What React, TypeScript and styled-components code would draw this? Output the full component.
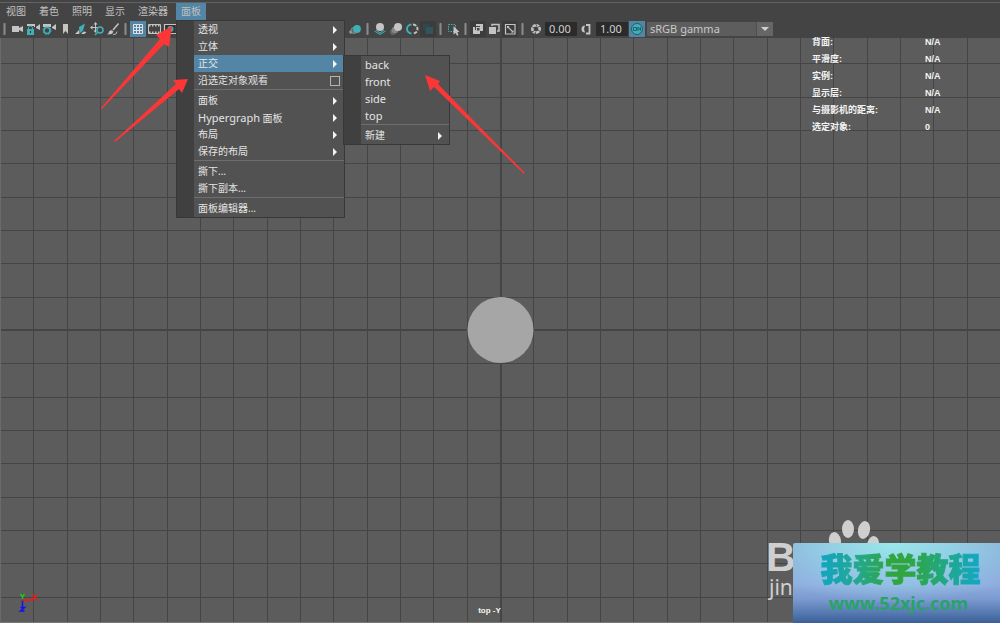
import React from 'react';
import styled, { createGlobalStyle } from 'styled-components';

const latin = '"Noto Sans", "Noto Sans CJK SC", sans-serif';
const teal = '#3fb0b8';
const pale = '#c4c4c4';

const GlobalStyle = createGlobalStyle`
  * { box-sizing: border-box; }
  body { margin: 0; background: #5c5c5c; font-family: ${latin}; font-size: 10px; color: #e0e0e0; }
  button, input, select { font-family: inherit; color: inherit; }
`;

const Panel = styled.div`
  position: relative;
  display: flex;
  flex-direction: column;
  min-height: 100vh;
  overflow: hidden;
`;

const MenuBar = styled.nav`
  display: flex;
  gap: 3px;
  margin-top: 2px;
  padding: 0 1px;
  border-top: 1px solid #626262;
`;

const Header = styled.header`
  background: #444;
  display: flex;
  flex-direction: column;
`;

const MenuSlot = styled.div`
  position: relative;
`;

const MenuTitle = styled.button<{ $open?: boolean }>`
  display: block;
  height: 17px;
  padding: 0 5px;
  border: 0;
  font-size: 10px;
  line-height: 17px;
  white-space: nowrap;
  color: #c0c0c0;
  background: ${(p) => (p.$open ? '#5285a6' : 'transparent')};
`;

const Dropdown = styled.div<{ $width: number; $sub?: boolean }>`
  position: absolute;
  z-index: 3;
  top: ${(p) => (p.$sub ? '0' : '100%')};
  left: ${(p) => (p.$sub ? '100%' : '0')};
  margin-left: ${(p) => (p.$sub ? '-1px' : '0')};
  width: ${(p) => p.$width}px;
  padding-left: 17px;
  border: 1px solid #383838;
  background: #404040;
`;

const MenuGroup = styled.div`
  background: #525252;
  & + & {
    border-top: 1px solid #6e6e6e;
    padding-top: 2px;
  }
`;

const MenuRow = styled.div`
  position: relative;
`;

const MenuItem = styled.button<{ $active?: boolean }>`
  display: flex;
  align-items: center;
  justify-content: space-between;
  width: 100%;
  height: 17px;
  padding: 0 4px;
  border: 0;
  font-size: 10px;
  line-height: 17px;
  text-align: left;
  white-space: nowrap;
  color: #e4e4e4;
  background: ${(p) => (p.$active ? '#5285a6' : 'transparent')};
`;

const Latin = styled.span`
  font-size: 11px;
`;

const SubArrow = styled.svg`
  width: 4px;
  height: 8px;
  margin-right: 3px;
  fill: #f4f4f4;
`;

const OptionBox = styled.span`
  width: 10px;
  height: 10px;
  border: 1px solid #b4b4b4;
`;

const Toolbar = styled.div`
  display: flex;
  align-items: center;
  height: 18px;
`;

const Divider = styled.span`
  flex: none;
  width: 3px;
  height: 12px;
  margin: 0 3px;
  border-radius: 1px;
  background: linear-gradient(90deg, #5a5a5a, #8a8a8a, #5a5a5a);
`;

const Tool = styled.button<{ $on?: boolean; $sunk?: boolean }>`
  flex: none;
  width: 16px;
  height: 16px;
  padding: 0;
  border: 0;
  background: ${(p) => (p.$on ? '#5285a6' : p.$sunk ? '#3c3c3c' : 'transparent')};
  svg { display: block; width: 16px; height: 16px; }
`;

const CoveredTools = styled.span`
  flex: none;
  width: 169px;
`;

const NumberField = styled.input`
  flex: none;
  width: 32px;
  height: 14px;
  margin: 0 1px 0 2px;
  padding: 0 4px;
  border: 0;
  border-radius: 1px;
  background: #2b2b2b;
  color: #d0d0d0;
  font-size: 11px;
  line-height: 14px;
`;

const SelectWrap = styled.span`
  position: relative;
  display: flex;
  margin-left: 2px;
  svg {
    position: absolute;
    right: 0;
    top: 0;
    width: 17px;
    height: 14px;
    pointer-events: none;
  }
`;

const ViewSelect = styled.select`
  appearance: none;
  width: 126px;
  height: 14px;
  padding: 0 3px;
  border: 0;
  border-radius: 1px;
  background: #5d5d5d;
  color: #c8c8c8;
  font-size: 11px;
  line-height: 14px;
`;

const Viewport = styled.main`
  position: relative;
  flex: 1;
  display: flex;
  flex-direction: column;
  justify-content: space-between;
  background: #5c5c5c;
  border-left: 1px solid #6a6a6a;
  border-bottom: 1px solid #787878;
`;

const Scene = styled.svg`
  position: absolute;
  inset: 0;
  width: 100%;
  height: 100%;
`;

const Hud = styled.dl`
  position: relative;
  align-self: flex-end;
  display: grid;
  grid-template-columns: 113px 75px;
  grid-auto-rows: 17px;
  margin: 0;
  margin-top: -4px;
  color: #f4f4f4;
  font: bold 9px/17px "Liberation Sans", "Noto Sans CJK SC", sans-serif;
  dd { margin: 0; }
`;

const ViewName = styled.p`
  position: relative;
  align-self: center;
  margin: 0;
  padding-right: 22px;
  padding-bottom: 5px;
  color: #f4f4f4;
  font: bold 8px/12px "Liberation Sans", sans-serif;
`;

const Axis = styled.svg`
  position: absolute;
  left: 15px;
  bottom: 5px;
  width: 28px;
  height: 26px;
  fill: none;
`;

const Annotations = styled.svg`
  position: absolute;
  z-index: 5;
  left: 0;
  top: 0;
  width: 540px;
  height: 190px;
  pointer-events: none;
  fill: #fb3636;
`;

const Watermark = styled.div`
  position: absolute;
  right: 0;
  bottom: 0;
  z-index: 4;
  width: 234px;
  height: 110px;
  overflow: hidden;
`;

const Paw = styled.svg`
  position: absolute;
  left: 61px;
  top: 0;
  width: 60px;
  height: 50px;
  fill: #cfcfcf;
`;

const Brand = styled.span`
  position: absolute;
  left: 0;
  top: 21px;
  color: #cfcfcf;
  font: bold 41px/46px "Liberation Sans", sans-serif;
`;

const BrandSub = styled.span`
  position: absolute;
  left: 3px;
  top: 59px;
  color: #cfcfcf;
  font: 21px/30px "Noto Sans", sans-serif;
`;

const SiteCard = styled.div`
  position: absolute;
  right: 0;
  bottom: 0;
  width: 207px;
  height: 80px;
  display: flex;
  flex-direction: column;
  align-items: center;
  gap: 2px;
  padding-top: 5px;
  border-radius: 2px 0 0 0;
  background:
    radial-gradient(ellipse 75% 75% at 48% 0%, #98e8ec 0%, #98dcec99 55%, transparent 100%),
    linear-gradient(180deg, #86a5d0 0%, #8fabdf 52%, #7b9bd0 70%, #3a6099 100%);
`;

const SiteName = styled.strong`
  margin-left: 8px;
  font: 900 32px/38px "Noto Sans CJK SC", sans-serif;
  white-space: nowrap;
  color: transparent;
  -webkit-text-stroke: 1px transparent;
  background: linear-gradient(90deg, #11a5c4, #22a890 22%, #31a53c 45%, #2fa545 58%, #1fa88c 80%, #10a8c8);
  -webkit-background-clip: text;
  background-clip: text;
`;

const SiteLink = styled.a`
  margin-left: 4px;
  color: #27a368;
  font: bold 18px/30px "Noto Sans", sans-serif;
  text-decoration: none;
`;

const icons: Record<string, React.ReactNode> = {
  camera: <path fill={pale} d="M3 5h7v6H3zM10 7l4-2v6l-4-2z" />,
  lock: (
    <>
      <path fill={pale} d="M2 3h8v3H2zM11 6l4-3v6l-4-2z" />
      <path fill="#444" d="M2 5h7v9H2z" />
      <path stroke={teal} fill="none" d="M3.500 9V7q0-2 2-2t2 2v2" />
      <path fill={teal} d="M2 8h7v6H2z" />
      <path fill="#333" d="M5 10h1v2H5z" />
    </>
  ),
  gear: (
    <>
      <path fill={pale} d="M2 3h8v3H2zM11 6l4-3v6l-4-2z" />
      <circle cx="6" cy="9.500" r="3" fill="#444" stroke={teal} strokeWidth="1.600" />
      <circle cx="6" cy="9.500" r="4" fill="none" stroke={teal} strokeWidth="1" strokeDasharray="1.600 1.540" />
    </>
  ),
  bookmark: <path fill={pale} d="M6 3h5v10l-2.500-3L6 13z" />,
  plane: (
    <>
      <path fill={teal} d="M6 6l6-3.500-2 7-3.500 3z" />
      <path fill={pale} d="M2 13l4-4 .3 4zM10.500 10.500l3 .5-2 2H8z" />
    </>
  ),
  panZoom: (
    <>
      <path stroke={pale} fill="none" d="M6.500 2.500v8M2 6.500h8" />
      <path fill={pale} d="M6.500 1l2 2.500h-4zM1 6.500l2.500-2v4zM6.500 12l-2-2.500h3z" />
      <circle cx="11" cy="9" r="3" fill="#444" stroke={teal} strokeWidth="1.500" />
      <path stroke={teal} strokeWidth="1.500" d="M9 11l-3 3" />
    </>
  ),
  brush: (
    <>
      <path stroke={pale} strokeWidth="1.500" fill="none" d="M13.500 2.500L8 9" />
      <path fill={pale} d="M6 9l2.500 1.500-1.500 2.500-5 .5q2-1 2-3z" />
      <path stroke={pale} strokeWidth=".9" fill="none" d="M8 13.500q4 .5 4-3" />
    </>
  ),
  grid: (
    <path stroke="#e2e2e2" fill="none" d="M3.500 3.500h9v9h-9zM6.500 3v10M9.500 3v10M3 6.500h10M3 9.500h10" />
  ),
  film: (
    <>
      <path stroke={pale} fill="none" d="M2.500 3.500h12v9h-12z" />
      <path stroke={pale} strokeWidth="2" strokeDasharray="1.500 1.500" d="M3 4.500h11M3 11.500h11" />
    </>
  ),
  gate: (
    <>
      <path stroke={pale} strokeWidth="1.200" fill="#333" d="M2.500 3.500h12v9h-12z" />
      <circle cx="8.500" cy="8" r="3" fill={teal} />
    </>
  ),
  motion: (
    <>
      <circle cx="4" cy="11" r="1.800" fill="#999" />
      <circle cx="7" cy="9.500" r="3" fill="#666" stroke="#aaa" strokeWidth=".6" />
      <circle cx="10" cy="8" r="3.900" fill={teal} />
    </>
  ),
  ground: (
    <>
      <path stroke={teal} fill="none" d="M2.500 10l5.500 3.500 5.500-3.500M4 9l4 3 4-3" />
      <circle cx="8" cy="6" r="4" fill={pale} />
    </>
  ),
  blur: (
    <>
      <circle cx="5" cy="11" r="3" fill="#666" />
      <circle cx="7" cy="9" r="3.300" fill="#858585" />
      <circle cx="10" cy="6" r="4" fill={pale} />
    </>
  ),
  ring: (
    <>
      <path stroke={teal} strokeWidth="1.900" fill="none" d="M7.500 3.500a4.500 4.500 0 0 0 0 9" />
      <path stroke={pale} strokeWidth="1.900" fill="none" strokeDasharray="3.500 1.200" d="M9 3.500a4.500 4.500 0 0 1 0 9" />
    </>
  ),
  dim: (
    <>
      <path fill="#2c4a4d" d="M3 3h6v6H3z" />
      <path fill="#2f565a" d="M6 6h7v7H6z" />
    </>
  ),
  pick: (
    <>
      <path stroke={teal} fill="none" strokeDasharray="1.500 1" d="M3.500 3.500h7v7h-7z" />
      <path fill={pale} d="M8.500 5l6 6-2.300.3 1.300 2.700-1.500.8-1.300-2.800-2.200 1.500z" />
    </>
  ),
  overlap: (
    <>
      <path fill={pale} d="M6 3h7v7H6zM3 6h7v7H3z" />
      <path stroke="#444" fill="none" d="M5.500 9V5.500H10" />
      <path fill="#444" d="M7 7h2.500v2.500H7z" />
    </>
  ),
  layers: (
    <>
      <path stroke={pale} strokeWidth="1.500" fill="none" d="M6 5V3.500h7V10h-2" />
      <path fill={pale} d="M3 6h7v7H3z" />
    </>
  ),
  expand: (
    <>
      <path stroke={pale} strokeWidth="1.200" fill="none" d="M3.500 3.500h9.500v9.500H3.500z" />
      <path stroke={pale} strokeWidth="1.200" d="M5.500 5.500l5.500 5.500" />
      <path fill={pale} d="M5 5h2.500L5 7.500zM11.500 11.500V9L9 11.500z" />
    </>
  ),
  aperture: (
    <>
      <circle cx="9" cy="8" r="3.700" fill="none" stroke={pale} strokeWidth="2.600" />
      <path stroke="#444" strokeWidth=".9" d="M8 2l2 3M14 5l-3 1M14 11l-3-2M9 14l-1-3M4 11l3-1M4 5l3 2" />
    </>
  ),
  gamma: (
    <>
      <path fill={pale} d="M7 4.500a3.500 3.500 0 0 0 0 7L6 8z" />
      <path stroke={pale} strokeWidth="1.800" fill="none" d="M8 4h3.500v8.500H8" />
    </>
  ),
  on: (
    <>
      <circle cx="8" cy="8" r="5.500" fill={teal} stroke="#235f6d" />
      <path stroke="#235f6d" fill="none" d="M4.500 6.500h3v3h-3zM9 10V6l2.500 3.500V6" />
    </>
  ),
};

const ToolButton = ({ name, on, sunk }: { name: string; on?: boolean; sunk?: boolean }) => (
  <Tool type="button" aria-label={name} $on={on} $sunk={sunk}>
    <svg viewBox="0 0 16 16">{icons[name]}</svg>
  </Tool>
);

const Caret = () => (
  <SubArrow viewBox="0 0 4 8">
    <path d="M0 0l4 4-4 4z" />
  </SubArrow>
);

type Entry = { label: React.ReactNode; sub?: boolean; option?: boolean; children?: Entry[][] };

const orthographic: Entry[][] = [
  ['back', 'front', 'side', 'top'].map((view) => ({ label: <Latin>{view}</Latin> })),
  [{ label: '新建', sub: true }],
];

const panelMenu: Entry[][] = [
  [
    { label: '透视', sub: true },
    { label: '立体', sub: true },
    { label: '正交', sub: true, children: orthographic },
    { label: '沿选定对象观看', option: true },
  ],
  [
    { label: '面板', sub: true },
    { label: <span><Latin>Hypergraph</Latin> 面板</span>, sub: true },
    { label: '布局', sub: true },
    { label: '保存的布局', sub: true },
  ],
  [{ label: '撕下...' }, { label: '撕下副本...' }],
  [{ label: '面板编辑器...' }],
];

const Menu = ({ groups, width, nested }: { groups: Entry[][]; width: number; nested?: boolean }) => (
  <Dropdown $width={width} $sub={nested}>
    {groups.map((group, g) => (
      <MenuGroup key={g}>
        {group.map((entry, i) => (
          <MenuRow key={i}>
            <MenuItem type="button" $active={!!entry.children}>
              {entry.label}
              {entry.sub && <Caret />}
              {entry.option && <OptionBox />}
            </MenuItem>
            {entry.children && <Menu groups={entry.children} width={107} nested />}
          </MenuRow>
        ))}
      </MenuGroup>
    ))}
  </Dropdown>
);

const stats = [
  ['背面:', 'N/A'],
  ['平滑度:', 'N/A'],
  ['实例:', 'N/A'],
  ['显示层:', 'N/A'],
  ['与摄影机的距离:', 'N/A'],
  ['选定对象:', '0'],
];

const gridSteps = Array.from({ length: 81 }, (_, i) => i - 40);

export default function App() {
  return (
    <Panel>
      <GlobalStyle />
      <Header>
        <MenuBar>
          {['视图', '着色', '照明', '显示', '渲染器'].map((title) => (
            <MenuTitle key={title} type="button">{title}</MenuTitle>
          ))}
          <MenuSlot>
            <MenuTitle type="button" $open>面板</MenuTitle>
            <Menu groups={panelMenu} width={169} />
          </MenuSlot>
        </MenuBar>
        <Toolbar>
          <Divider />
          {['camera', 'lock', 'gear', 'bookmark', 'plane', 'panZoom', 'brush'].map((n) => (
            <ToolButton key={n} name={n} />
          ))}
          <Divider />
          <ToolButton name="grid" on />
          <ToolButton name="film" />
          <ToolButton name="gate" />
          <CoveredTools />
          <ToolButton name="motion" />
          <Divider />
          <ToolButton name="ground" />
          <ToolButton name="blur" />
          <ToolButton name="ring" />
          <ToolButton name="dim" sunk />
          <Divider />
          <ToolButton name="pick" />
          <Divider />
          <ToolButton name="overlap" sunk />
          <ToolButton name="layers" />
          <ToolButton name="expand" sunk />
          <Divider />
          <ToolButton name="aperture" />
          <NumberField aria-label="曝光" defaultValue="0.00" />
          <ToolButton name="gamma" />
          <NumberField aria-label="Gamma" defaultValue="1.00" />
          <ToolButton name="on" on />
          <SelectWrap>
            <ViewSelect aria-label="视图变换" defaultValue="sRGB gamma">
              <option>sRGB gamma</option>
            </ViewSelect>
            <svg viewBox="0 0 17 14">
              <path fill="#666" d="M0 0h17v14H0z" />
              <path fill="#4e4e4e" d="M0 0h1v14H0z" />
              <path fill="#d0d0d0" d="M5 5h8l-4 4z" />
            </svg>
          </SelectWrap>
        </Toolbar>
      </Header>

      <Viewport>
        <Scene>
          <svg x="50%" y="50%" overflow="visible">
            <g stroke="#454545" shapeRendering="crispEdges">
              {gridSteps.map((n) => {
                const at = Math.round((n * 100) / 3);
                return (
                  <React.Fragment key={n}>
                    <line x1={at} x2={at} y1={-1400} y2={1400} strokeWidth={n === 0 ? 2 : 1} />
                    <line y1={at} y2={at} x1={-1400} x2={1400} strokeWidth={n === 0 ? 2 : 1} />
                  </React.Fragment>
                );
              })}
            </g>
            <circle r="33" fill="#a6a6a6" />
          </svg>
        </Scene>
        <Hud>
          {stats.map(([label, value]) => (
            <React.Fragment key={label}>
              <dt>{label}</dt>
              <dd>{value}</dd>
            </React.Fragment>
          ))}
        </Hud>
        <ViewName>top -Y</ViewName>
        <Axis viewBox="0 0 28 26">
          <path stroke="#1010f0" strokeWidth="1.500" d="M6.500 9v11M4.500 16.500h4l-4 3.500h4" />
          <path stroke="#18c818" strokeWidth="1.500" d="M4.500 3l2 3 2-3M6.500 6v2" />
          <path stroke="#ff1010" strokeWidth="1.500" d="M6 9H18" />
          <path stroke="#ff1010" strokeWidth="1.500" d="M17 4L21 8" />
          <path stroke="#ff1010" strokeWidth="1.500" d="M21 4L17 8" />
        </Axis>
      </Viewport>

      <Watermark>
        <Paw viewBox="0 0 60 50">
          <ellipse cx="21" cy="16" rx="6" ry="9" />
          <ellipse cx="37" cy="17" rx="6" ry="9" transform="rotate(12 37 17)" />
          <ellipse cx="8" cy="28" rx="6" ry="9" transform="rotate(-10 8 28)" />
          <ellipse cx="46" cy="32" rx="6" ry="9" transform="rotate(10 46 32)" />
          <circle cx="27" cy="43" r="13" />
        </Paw>
        <Brand>B</Brand>
        <BrandSub>jin</BrandSub>
        <SiteCard>
          <SiteName>我爱学教程</SiteName>
          <SiteLink href="#">www.52xjc.com</SiteLink>
        </SiteCard>
      </Watermark>

      <Annotations viewBox="0 0 540 190">
        <path d="M172 26L156 35l4 4-59 69 1 1 62-65 5 3z" />
        <path d="M188 79l-15 1 3 4-62 57 1 1 64-53 3 4z" />
        <path d="M425 75l15 6-2 3 87 89-1 1-90-87-4 4z" />
      </Annotations>
    </Panel>
  );
}
